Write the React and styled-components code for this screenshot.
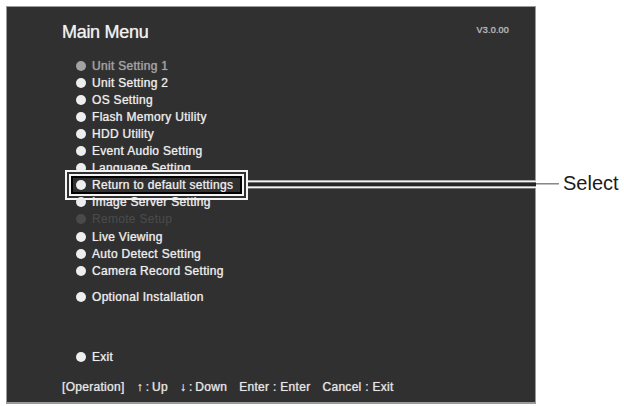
import React from "react";
import styled, { createGlobalStyle } from "styled-components";

const GlobalStyle = createGlobalStyle`
    body {
        margin: 0;
        background: #ffffff;
        font-family: "Liberation Sans", Arial, sans-serif;
    }
`;

const Page = styled.div`
    padding: 6px 0 0 6px;
`;

const Screen = styled.div`
    width: 530px;
    height: 398px;
    box-sizing: border-box;
    background: #303030;
    border: 1px solid #9a9a9a;
    border-bottom-width: 2px;
    display: flex;
    flex-direction: column;
    padding: 13.6px 0 0 55px;
    color: #eeeeee;
    text-shadow: 0 0 1px rgba(255, 255, 255, 0.45);
    -webkit-text-stroke: 0.15px currentColor;
`;

const Header = styled.div`
    display: flex;
    justify-content: space-between;
    align-items: center;
    padding-right: 26px;
`;

const Title = styled.h1`
    margin: 0;
    font-size: 18px;
    line-height: 22px;
    font-weight: normal;
    letter-spacing: -0.3px;
    color: #f2f2f2;
`;

const Version = styled.span`
    font-size: 9px;
    line-height: 1;
    letter-spacing: 0.2px;
    color: #bcbcbc;
    margin-bottom: 3px;
`;

const Menu = styled.ul`
    list-style: none;
    margin: 14.5px 0 0 14px;
    padding: 0;
`;

const tones = {
    normal: "#eeeeee",
    muted: "#a2a2a2",
    off: "#4a4a4a",
};

const Item = styled.li`
    position: relative;
    height: 17.1px;
    display: flex;
    align-items: center;
    gap: 6px;
    margin-top: ${(p) => p.$space || 0}px;
    font-size: 12px;
    letter-spacing: 0.3px;
    color: ${(p) => tones[p.$tone || "normal"]};
    ${(p) => p.$tone === "off" && "text-shadow: none;"}
`;

const Bullet = styled.span`
    width: 10px;
    height: 10px;
    border-radius: 50%;
    background: currentColor;
    flex: none;
`;

// double white frame around the highlighted entry
const Frame = styled.span`
    position: absolute;
    left: -11px;
    top: -6.9px;
    width: 183px;
    height: 30px;
    box-sizing: border-box;
    border: 2px solid #f4f4f4;
    box-shadow: inset 0 0 0 2px #303030, inset 0 0 0 4px #f4f4f4,
        inset 0 0 0 6px #000000;
`;

const Callout = styled.span`
    position: absolute;
    left: 172px;
    top: 50%;
    transform: translateY(-55%);
    display: flex;
    align-items: center;
    text-shadow: none;
    -webkit-text-stroke: 0;
`;

const DoubleRule = styled.span`
    width: 288px;
    height: 8px;
    box-sizing: border-box;
    border-top: 2px solid #f4f4f4;
    border-bottom: 2px solid #f4f4f4;
    background: #262626;
`;

const ThinRule = styled.span`
    width: 23px;
    height: 1px;
    background: #4a4a4a;
`;

const Label = styled.span`
    margin-left: 4px;
    font-size: 20px;
    letter-spacing: 0;
    color: #1c1c1c;
`;

const Footer = styled.div`
    display: flex;
    gap: 12px;
    margin-top: 13.7px;
    font-size: 12px;
    line-height: 16px;
    letter-spacing: 0.3px;
    color: #e6e6e6;
`;

const Key = styled.span`
    white-space: pre;
`;

const items = [
    { label: "Unit Setting 1", tone: "muted" },
    { label: "Unit Setting 2" },
    { label: "OS Setting" },
    { label: "Flash Memory Utility" },
    { label: "HDD Utility" },
    { label: "Event Audio Setting" },
    { label: "Language Setting" },
    { label: "Return to default settings", selected: true },
    { label: "Image Server Setting" },
    { label: "Remote Setup", tone: "off" },
    { label: "Live Viewing" },
    { label: "Auto Detect Setting" },
    { label: "Camera Record Setting" },
    { label: "Optional Installation", space: 8.7 },
    { label: "Exit", space: 42.9 },
];

const keys = [
    "[Operation]",
    "\u2191\u2009:\u2009Up",
    "\u2193\u2009:\u2009Down",
    "Enter : Enter",
    "Cancel : Exit",
];

export default function App() {
    return (
        <Page>
            <GlobalStyle />
            <Screen>
                <Header>
                    <Title>Main Menu</Title>
                    <Version>V3.0.00</Version>
                </Header>
                <Menu>
                    {items.map((it) => (
                        <Item key={it.label} $tone={it.tone} $space={it.space}>
                            <Bullet />
                            {it.label}
                            {it.selected && (
                                <>
                                    <Frame />
                                    <Callout>
                                        <DoubleRule />
                                        <ThinRule />
                                        <Label>Select</Label>
                                    </Callout>
                                </>
                            )}
                        </Item>
                    ))}
                </Menu>
                <Footer>
                    {keys.map((k) => (
                        <Key key={k}>{k}</Key>
                    ))}
                </Footer>
            </Screen>
        </Page>
    );
}
